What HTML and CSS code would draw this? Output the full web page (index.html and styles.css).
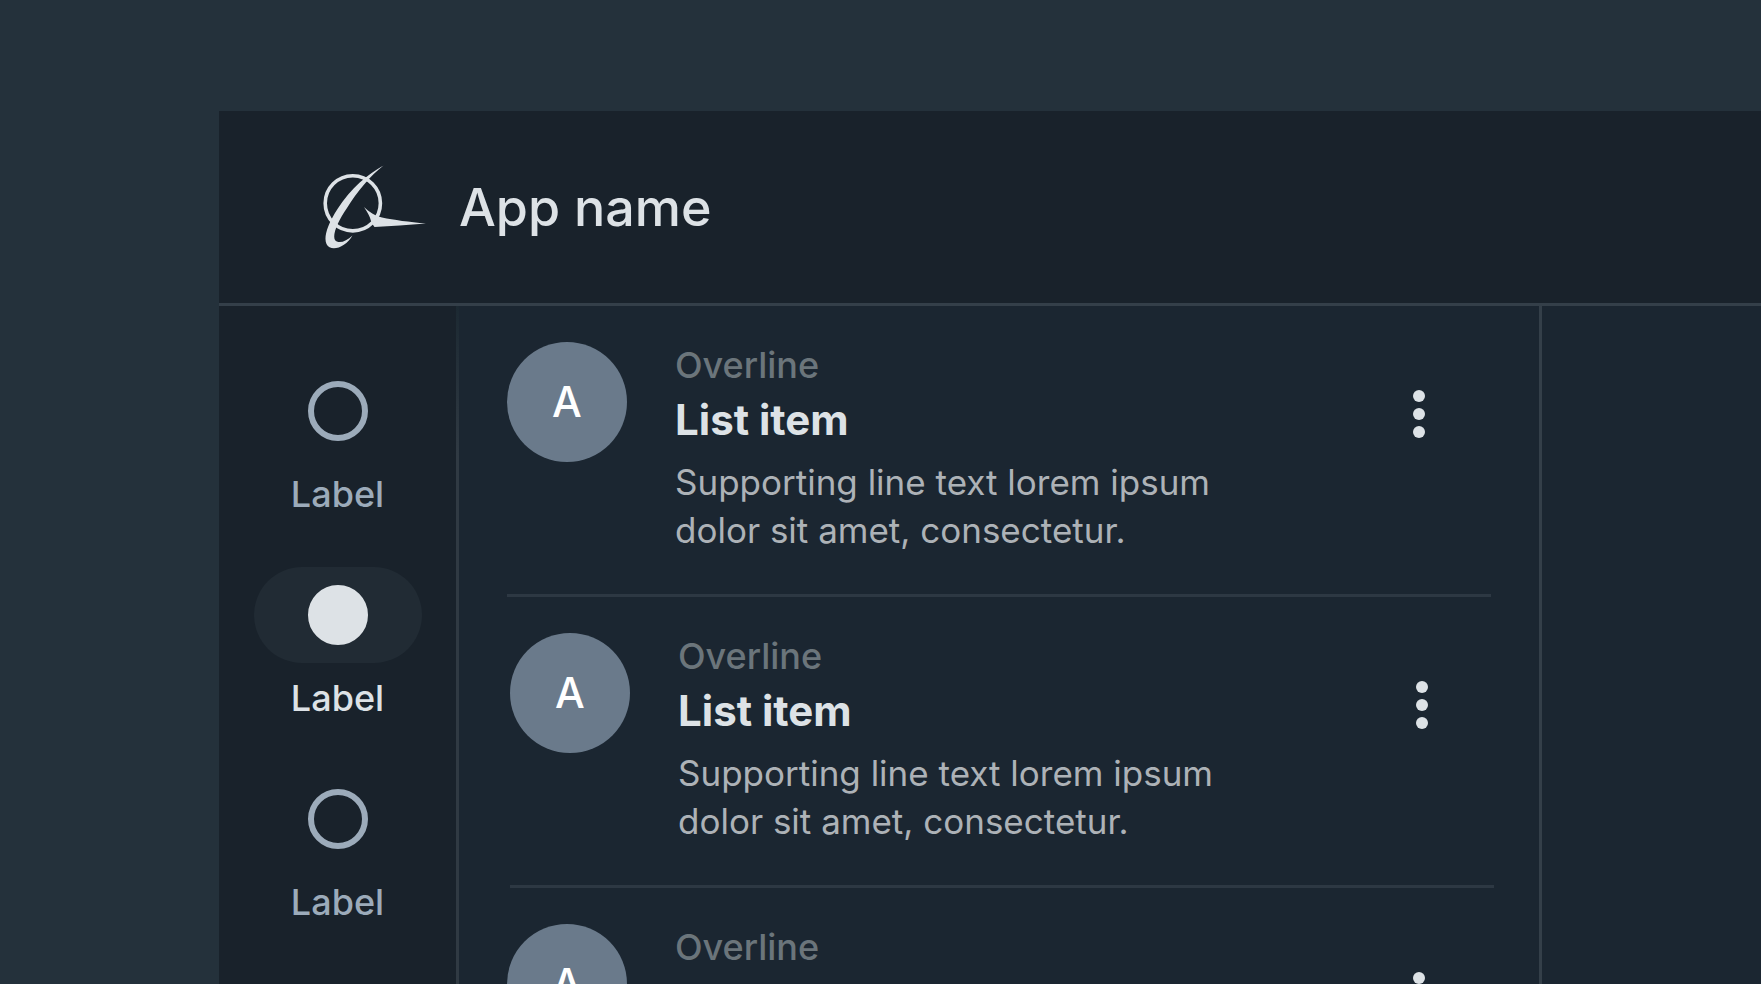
FILE: index.html
```html
<!DOCTYPE html>
<html lang="en">
<head>
    <meta charset="UTF-8">
    <meta name="viewport" content="width=device-width, initial-scale=1.0">
    <title>App name</title>
    <link rel="stylesheet" href="styles.css">
</head>
<body>
    <div class="app">
        <header class="app-bar">
            <svg class="logo" viewBox="0 0 104 86" aria-hidden="true">
                <circle cx="29.8" cy="38.3" r="27.6" fill="none" stroke="currentColor" stroke-width="3.6"/>
                <path d="M60.5 .5C45 9 28 23 14.500 44C4 60 .5 73 3.500 79C8 88 23 82 29.500 70.500C23 77 15 79 12 75C9 70 15 56 24 43C34 27 47 11 60.500 .5Z" fill="currentColor"/>
                <path d="M41 42C46 47 52 51 59 52.500C71 55 86 57 103 58.500C85 60 68 61 51.500 62C50 60 48.500 58 48 56C47 51 44 47 41 42Z" fill="currentColor"/>
            </svg>
            <h1 class="app-name">App name</h1>
        </header>
        <div class="app-body">
            <nav class="rail">
                <a class="rail-item" href="#">
                    <span class="pill"><span class="circle"></span></span>
                    <span class="rail-label">Label</span>
                </a>
                <a class="rail-item active" href="#">
                    <span class="pill"><span class="circle"></span></span>
                    <span class="rail-label">Label</span>
                </a>
                <a class="rail-item" href="#">
                    <span class="pill"><span class="circle"></span></span>
                    <span class="rail-label">Label</span>
                </a>
            </nav>
            <ul class="list">
                <li class="list-item">
                    <span class="avatar">A</span>
                    <div class="item-text">
                        <span class="overline">Overline</span>
                        <h2 class="item-title">List item</h2>
                        <p class="supporting">Supporting line text lorem ipsum dolor sit amet, consectetur.</p>
                    </div>
                    <button class="more" type="button" aria-label="More">
                        <svg viewBox="0 0 12 48"><circle cx="6" cy="6" r="6"/><circle cx="6" cy="24" r="6"/><circle cx="6" cy="42" r="6"/></svg>
                    </button>
                </li>
                <li class="list-item shifted">
                    <span class="avatar">A</span>
                    <div class="item-text">
                        <span class="overline">Overline</span>
                        <h2 class="item-title">List item</h2>
                        <p class="supporting">Supporting line text lorem ipsum dolor sit amet, consectetur.</p>
                    </div>
                    <button class="more" type="button" aria-label="More">
                        <svg viewBox="0 0 12 48"><circle cx="6" cy="6" r="6"/><circle cx="6" cy="24" r="6"/><circle cx="6" cy="42" r="6"/></svg>
                    </button>
                </li>
                <li class="list-item">
                    <span class="avatar">A</span>
                    <div class="item-text">
                        <span class="overline">Overline</span>
                    </div>
                    <button class="more" type="button" aria-label="More">
                        <svg viewBox="0 0 12 48"><circle cx="6" cy="6" r="6"/><circle cx="6" cy="24" r="6"/><circle cx="6" cy="42" r="6"/></svg>
                    </button>
                </li>
            </ul>
            <main class="detail"></main>
        </div>
    </div>
</body>
</html>
```
FILE: styles.css
```css
* {
    box-sizing: border-box;
}
body {
    font-family: Inter, "Open Sans", sans-serif;
    background-color: #24313b;
    color: #dde2e6;
    margin: 0;
    height: 100vh;
    padding: 111px 0 0 219px;
    overflow: hidden;
}
h1, h2, p, ul {
    margin: 0;
    padding: 0;
}
.app {
    display: flex;
    flex-direction: column;
    height: 100%;
    background-color: #1b2631;
}
.app-bar {
    display: flex;
    flex-shrink: 0;
    align-items: center;
    gap: 32px;
    padding: 54px 104px 52px;
    background-color: #19222b;
    border-bottom: 3px solid #343f49;
}
.logo {
    width: 104px;
    height: 86px;
}
.app-name {
    font-size: 52px;
    font-weight: 500;
    line-height: 72px;
}
.app-body {
    display: flex;
    flex: 1;
    min-height: 0;
}
.rail {
    display: flex;
    flex-direction: column;
    flex-shrink: 0;
    align-items: center;
    gap: 50px;
    width: 240px;
    padding-top: 57px;
    background-color: #19222b;
    border-right: 3px solid;
    border-image: linear-gradient(#1c2932, #303a43 150px) 1;
}
.rail-item {
    display: flex;
    flex-direction: column;
    align-items: center;
    gap: 12px;
    color: #9cabba;
    text-decoration: none;
}
.pill {
    display: flex;
    align-items: center;
    justify-content: center;
    width: 168px;
    height: 96px;
    border-radius: 48px;
}
.circle {
    width: 60px;
    height: 60px;
    border: 6px solid currentColor;
    border-radius: 50%;
}
.rail-label {
    font-size: 36px;
    font-weight: 500;
    line-height: 46px;
}
.active {
    color: #dde2e6;
}
.active .pill {
    background-color: #212b34;
}
.active .circle {
    background-color: currentColor;
}
.list {
    flex: 0 0 1083px;
    list-style: none;
    border-right: 3px solid #343f49;
}
.list-item {
    display: flex;
    align-items: flex-start;
    height: 291px;
    margin: 0 48px;
    padding-top: 36px;
    border-bottom: 3px solid #2d3843;
}
.shifted {
    margin: 0 45px 0 51px;
}
.avatar {
    flex-shrink: 0;
    width: 120px;
    border-radius: 50%;
    background-color: #6a7a8b;
    color: #fff;
    font-size: 42px;
    font-weight: 500;
    line-height: 120px;
    text-align: center;
}
.item-text {
    flex: 1;
    margin-left: 48px;
}
.overline {
    display: block;
    color: #6b757b;
    font-size: 36px;
    font-weight: 500;
    line-height: 46px;
}
.item-title {
    font-size: 42px;
    font-weight: 700;
    line-height: 64px;
}
.supporting {
    max-width: 600px;
    margin-top: 6px;
    color: #adb2b7;
    font-size: 35px;
    line-height: 48px;
}
.more {
    width: 48px;
    margin: 48px 48px 0 0;
    padding: 0;
    border: none;
    background: none;
    color: #dde2e6;
    cursor: pointer;
}
.more svg {
    display: block;
    width: 12px;
    height: 48px;
    margin: 0 auto;
    fill: currentColor;
}
.detail {
    flex: 1;
}
```
